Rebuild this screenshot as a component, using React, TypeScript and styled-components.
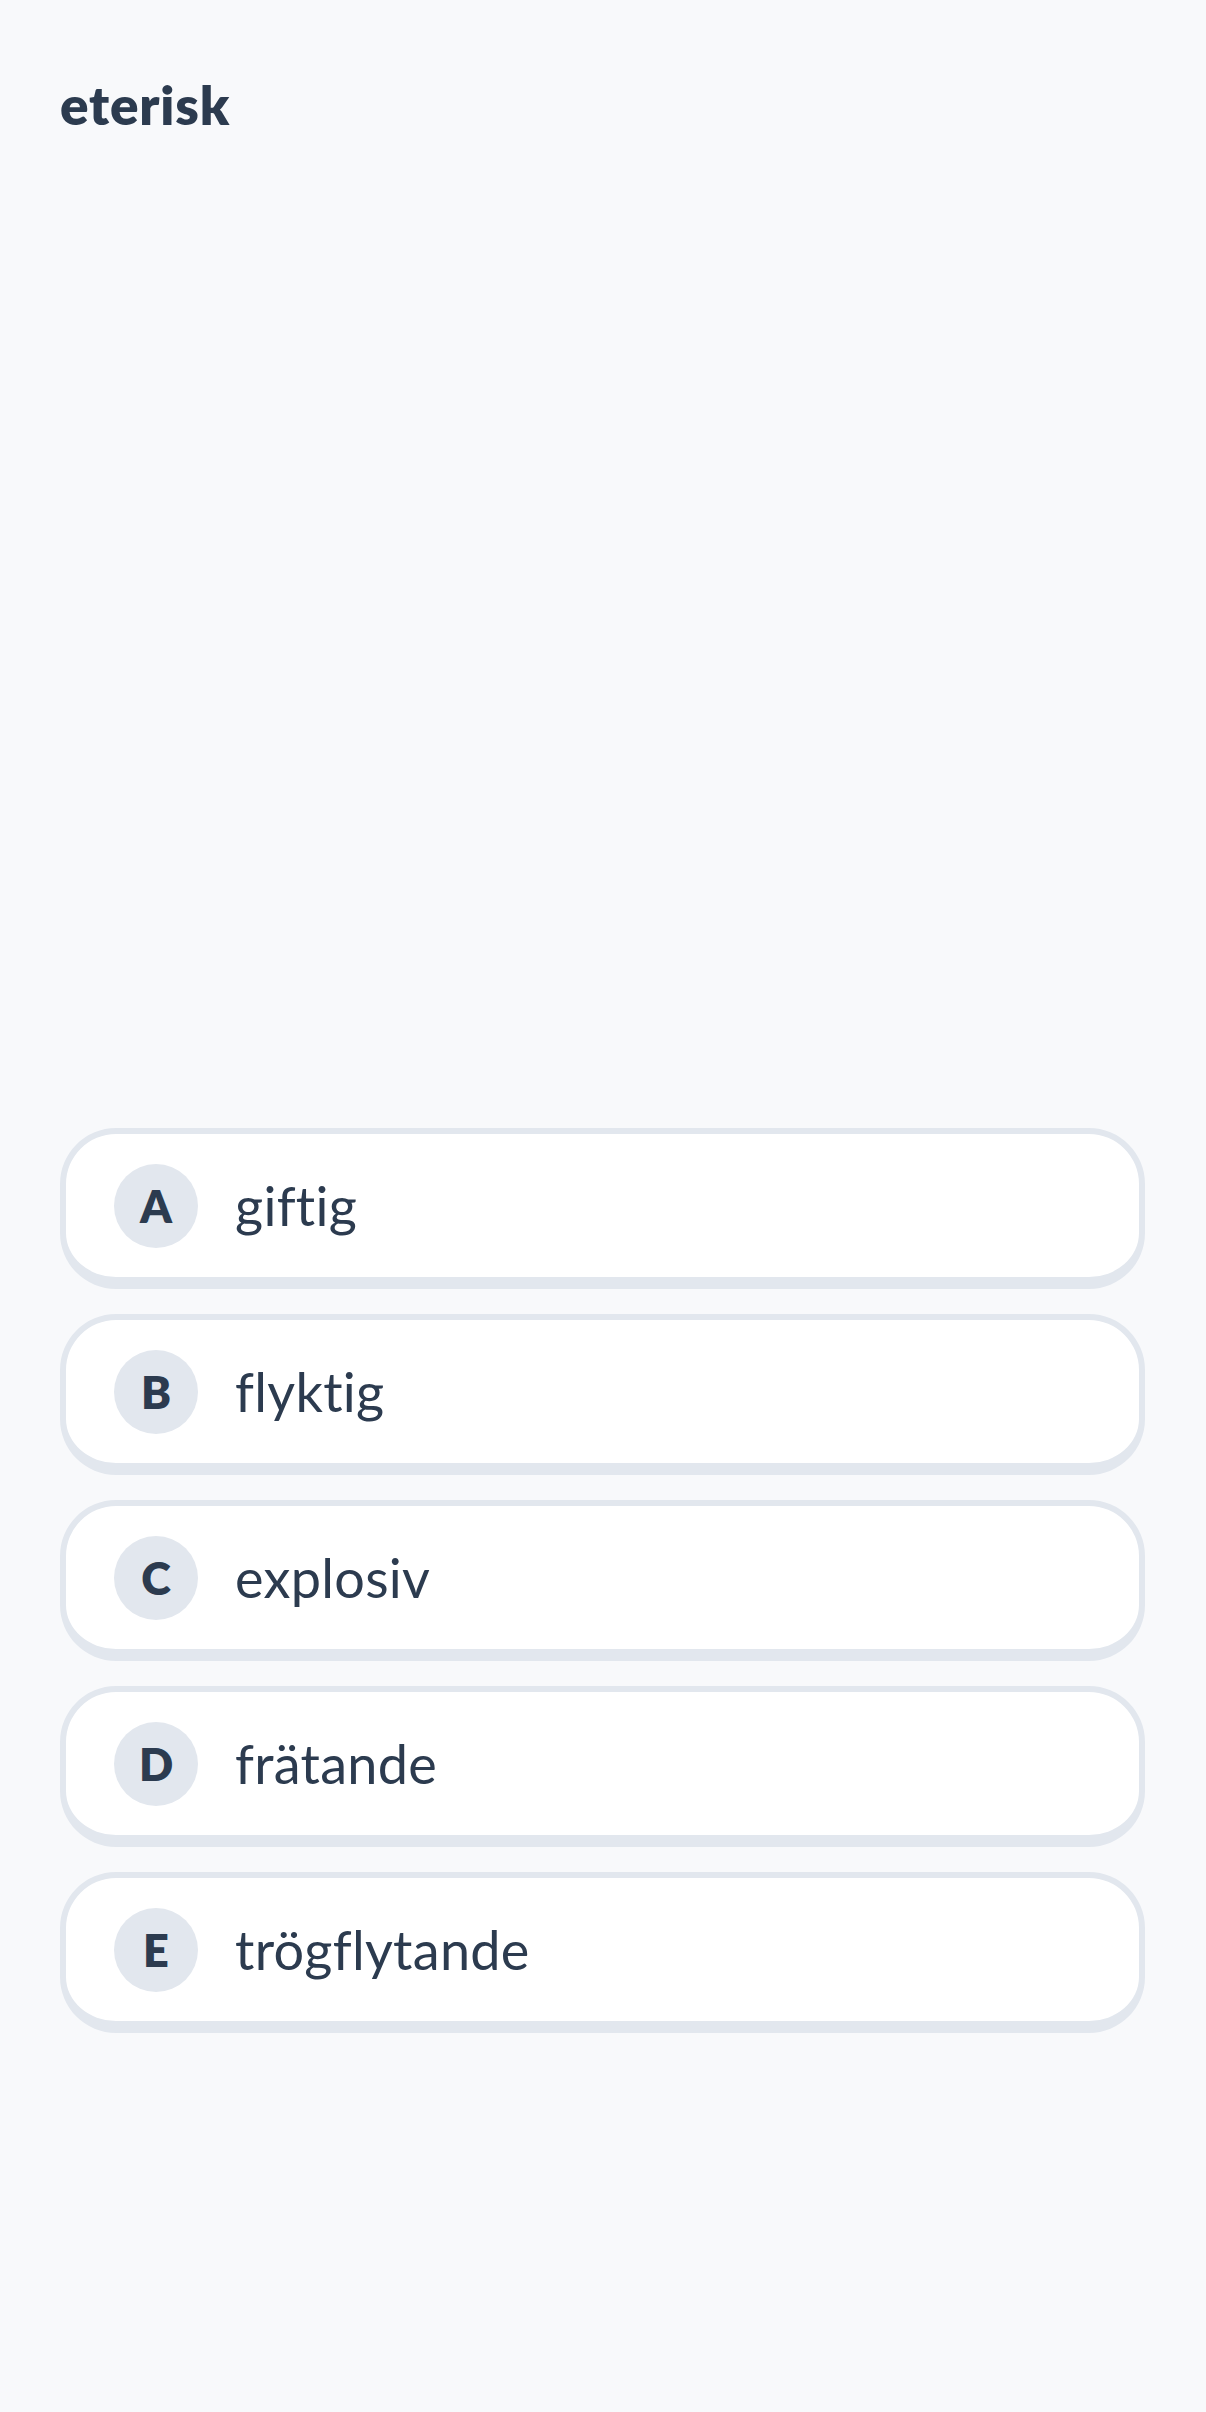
import React from "react";
import styled, { createGlobalStyle } from "styled-components";

const GlobalStyle = createGlobalStyle`
  html, body {
    margin: 0;
    padding: 0;
    background: #f8f9fb;
  }
  body {
    font-family: Lato, "Open Sans", "Liberation Sans", sans-serif;
    font-variant-ligatures: none;
    color: #2c3b4f;
  }
  * {
    box-sizing: border-box;
  }
`;

const Page = styled.main`
  min-height: 100vh;
  display: flex;
  flex-direction: column;
  padding: 60px 61px 0 60px;
`;

const Title = styled.h1`
  margin: 0;
  font-size: 53px;
  line-height: 90px;
  font-weight: 800;
  letter-spacing: 0.8px;
  color: #2c3b4f;
`;

const Prompt = styled.div`
  flex: 1;
`;

const Options = styled.ul`
  list-style: none;
  margin: 0;
  padding: 0;
  display: flex;
  flex-direction: column;
  gap: 25px;
`;

const Option = styled.li`
  display: flex;
  align-items: center;
  gap: 37px;
  height: 161px;
  padding: 0 48px;
  background: #fff;
  border: 6px solid #e2e7ee;
  border-bottom-width: 12px;
  border-radius: 56px;
  cursor: pointer;
`;

const Letter = styled.span`
  flex: none;
  width: 84px;
  height: 84px;
  border-radius: 50%;
  background: #e2e7ee;
  display: flex;
  align-items: center;
  justify-content: center;
  font-size: 45px;
  font-weight: 800;
  color: #2c3b4f;
`;

const Answer = styled.span`
  font-size: 54px;
  letter-spacing: 0.3px;
  color: #2c3b4f;
`;

const Footer = styled.div`
  height: 379px;
`;

const answers = ["giftig", "flyktig", "explosiv", "frätande", "trögflytande"];

export default function App() {
  return (
    <>
      <GlobalStyle />
      <Page>
        <Title>eterisk</Title>
        <Prompt />
        <Options>
          {answers.map((a, i) => (
            <Option key={a}>
              <Letter>{String.fromCharCode(65 + i)}</Letter>
              <Answer>{a}</Answer>
            </Option>
          ))}
        </Options>
        <Footer />
      </Page>
    </>
  );
}
